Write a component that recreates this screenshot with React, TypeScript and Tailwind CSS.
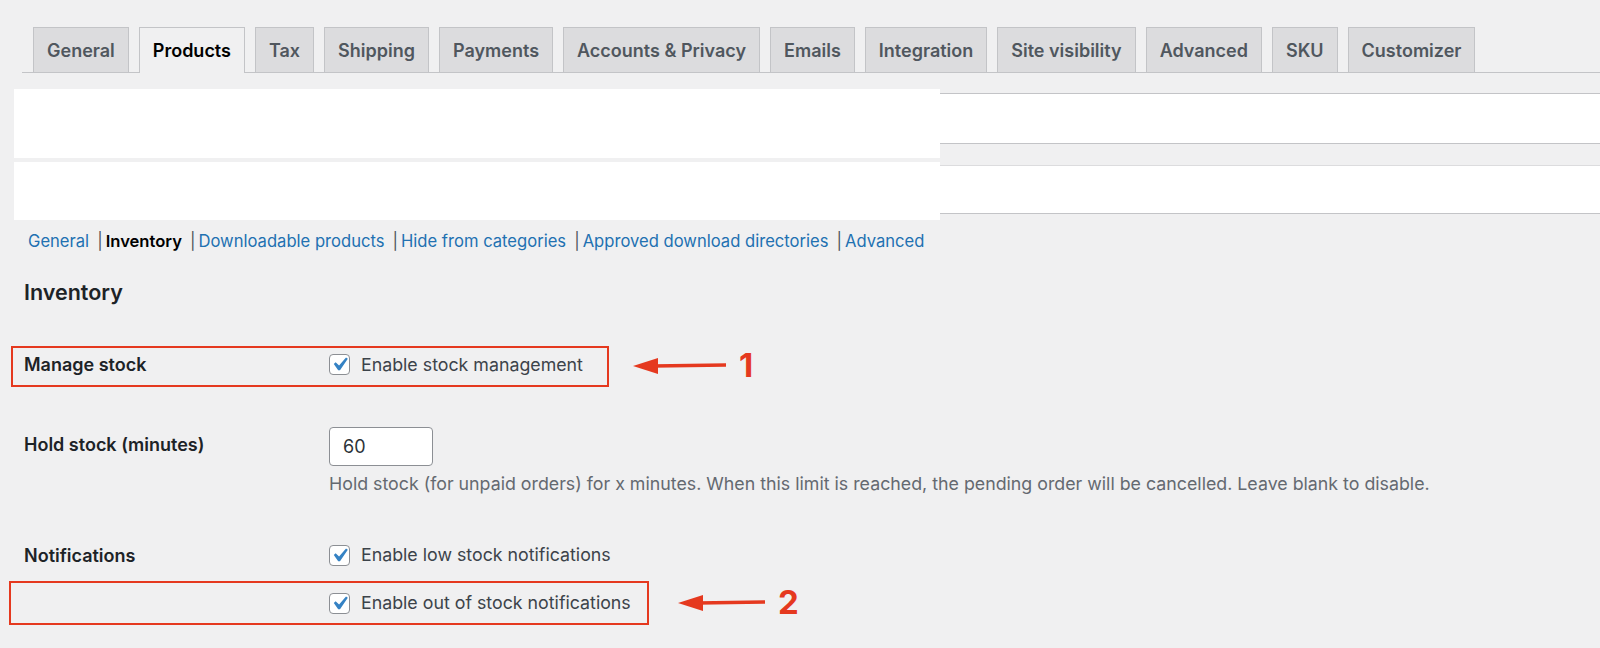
import React from "react";

const tabs = [
  "General",
  "Products",
  "Tax",
  "Shipping",
  "Payments",
  "Accounts & Privacy",
  "Emails",
  "Integration",
  "Site visibility",
  "Advanced",
  "SKU",
  "Customizer",
];

function Tab({ label, active }: { label: string; active?: boolean }) {
  return active ? (
    <div className="h-[46px] -mb-px px-[13px] flex items-center border border-b-0 border-[#c3c4c7] bg-[#f0f0f1] text-[18px] font-semibold text-black">
      {label}
    </div>
  ) : (
    <div className="h-[45px] px-[13px] flex items-center border border-b-0 border-[#c3c4c7] bg-[#dcdcde] text-[18px] font-semibold text-[#50575e]">
      {label}
    </div>
  );
}

function Checkbox() {
  return (
    <span className="relative w-[21px] h-[21px] rounded-[4px] border border-[#8c8f94] bg-white flex items-center justify-center shrink-0">
      <svg viewBox="0 0 20 20" width="27" height="27" className="absolute -top-[4px] overflow-visible">
        <path d="M14.83 4.89l1.34.94-5.81 8.38H9.02L5.78 9.67l1.34-1.25 2.57 2.4z" fill="#3582c4" />
      </svg>
    </span>
  );
}

function CheckRow({ label }: { label: string }) {
  return (
    <div className="flex items-center gap-[11px] h-[22px]">
      <Checkbox />
      <span className="text-[17.8px] leading-[22px] text-[#3c434a]">{label}</span>
    </div>
  );
}

function Arrow({ num, len }: { num: string; len: number }) {
  return (
    <div className="flex items-center gap-[13px]">
      <svg width={len} height="20" viewBox={`0 0 ${len} 20`}>
        <polygon points="0,10 25,2 25,18" fill="#e5391f" />
        <line x1="20" y1="10" x2={len} y2="9" stroke="#e5391f" strokeWidth="3.4" />
      </svg>
      <span className="text-[33px] font-bold leading-none text-[#e5391f]">{num}</span>
    </div>
  );
}

function Sep() {
  return <span className="ml-[8px] mr-[3px] text-[#50575e]">|</span>;
}

export default function App() {
  return (
    <div className="min-h-[648px] w-full bg-[#f0f0f1] overflow-hidden [font-family:Inter,'Noto_Sans',sans-serif]">
      {/* Tabs */}
      <div className="ml-[22px] pt-[27px]">
        <div className="flex items-end gap-[10px] pl-[11px] border-b border-[#c3c4c7]">
          {tabs.map((t) => (
            <Tab key={t} label={t} active={t === "Products"} />
          ))}
        </div>
      </div>

      {/* Notices (redacted) */}
      <div className="mt-[16px] flex h-[69px]">
        <div className="ml-[14px] w-[926px] h-full bg-white" />
        <div className="flex-1 mt-[4px] h-[51px] bg-white border-y border-[#c3c4c7]" />
      </div>
      <div className="mt-[4px] flex h-[58px]">
        <div className="ml-[14px] w-[926px] h-full bg-white" />
        <div className="flex-1 mt-[3px] h-[49px] bg-white border-t border-t-[#dcdcde] border-b border-b-[#c3c4c7]" />
      </div>

      {/* Sub navigation */}
      <div className="mt-[10px] pl-[28px] flex items-center h-[22px] text-[16.6px]">
        <a className="text-[#2271b1]">General</a>
        <Sep />
        <span className="font-semibold text-black">Inventory</span>
        <Sep />
        <a className="text-[#2271b1]">Downloadable products</a>
        <Sep />
        <a className="text-[#2271b1]">Hide from categories</a>
        <Sep />
        <a className="text-[#2271b1]">Approved download directories</a>
        <Sep />
        <a className="text-[#2271b1]">Advanced</a>
      </div>

      {/* Heading */}
      <h2 className="mt-[26px] pl-[24px] h-[28px] leading-[28px] text-[21.5px] font-semibold text-[#1d2327]">
        Inventory
      </h2>

      {/* Manage stock */}
      <div className="relative mt-[40px] pl-[24px] h-[37px] grid grid-cols-[305px_1fr] items-center">
        <div className="text-[18px] font-semibold text-[#1d2327]">Manage stock</div>
        <CheckRow label="Enable stock management" />
        <div className="absolute left-[11px] top-0 w-[598px] h-[41px] border-2 border-[#e5391f]" />
        <div className="absolute left-[633px] top-[3px]">
          <Arrow num="1" len={93} />
        </div>
      </div>

      {/* Hold stock */}
      <div className="mt-[44px] pl-[24px] grid grid-cols-[305px_1fr]">
        <div className="h-[34px] flex items-center text-[18px] font-semibold text-[#1d2327]">Hold stock (minutes)</div>
        <div>
          <div className="w-[104px] h-[39px] rounded-[4px] border border-[#8c8f94] bg-white flex items-center px-[13px] text-[18px] text-[#2c3338]">
            60
          </div>
          <div className="mt-[7px] h-[22px] leading-[22px] text-[17.8px] text-[#646970] whitespace-nowrap">
            Hold stock (for unpaid orders) for x minutes. When this limit is reached, the pending order will be cancelled. Leave blank to disable.
          </div>
        </div>
      </div>

      {/* Notifications */}
      <div className="mt-[49px] pl-[24px] grid grid-cols-[305px_1fr]">
        <div className="h-[22px] flex items-center text-[18px] font-semibold text-[#1d2327]">Notifications</div>
        <CheckRow label="Enable low stock notifications" />
      </div>
      <div className="relative mt-[26px] pl-[24px] grid grid-cols-[305px_1fr]">
        <div className="h-[22px]" />
        <CheckRow label="Enable out of stock notifications" />
        <div className="absolute left-[9px] top-[-11px] w-[640px] h-[44px] border-2 border-[#e5391f]" />
        <div className="absolute left-[678px] top-[-6px]">
          <Arrow num="2" len={87} />
        </div>
      </div>
    </div>
  );
}
